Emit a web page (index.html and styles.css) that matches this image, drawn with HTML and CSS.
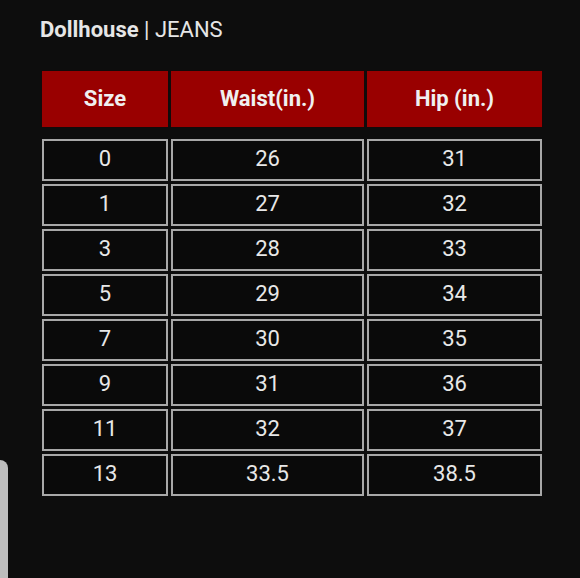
FILE: index.html
```html
<!DOCTYPE html>
<html>
<head>
<meta charset="utf-8">
<link rel="stylesheet" href="styles.css">
</head>
<body>
<div class="page">
  <h1 class="title"><b>Dollhouse</b> | JEANS</h1>
  <div class="chart">
    <div class="head">Size</div><div class="head">Waist(in.)</div><div class="head">Hip (in.)</div>
    <div class="spacer"></div>
    <div class="cell">0</div><div class="cell">26</div><div class="cell">31</div>
    <div class="cell">1</div><div class="cell">27</div><div class="cell">32</div>
    <div class="cell">3</div><div class="cell">28</div><div class="cell">33</div>
    <div class="cell">5</div><div class="cell">29</div><div class="cell">34</div>
    <div class="cell">7</div><div class="cell">30</div><div class="cell">35</div>
    <div class="cell">9</div><div class="cell">31</div><div class="cell">36</div>
    <div class="cell">11</div><div class="cell">32</div><div class="cell">37</div>
    <div class="cell">13</div><div class="cell">33.5</div><div class="cell">38.5</div>
  </div>
</div>
<div class="edge"></div>
</body>
</html>
```

FILE: styles.css
```css
html, body {
  margin: 0;
  padding: 0;
  background: #0d0d0d;
  width: 580px;
  height: 578px;
  overflow: hidden;
  font-family: Roboto, "Liberation Sans", sans-serif;
}
.page {
  padding: 18px 0 0 42px;
}
.title {
  margin: 0 0 29px -2px;
  font-size: 22px;
  line-height: 24px;
  font-weight: 400;
  color: #e6e6e6;
}
.title b {
  font-weight: 700;
}
.chart {
  display: grid;
  grid-template-columns: 126px 193px 175px;
  grid-template-rows: 56px 6px;
  grid-auto-rows: 42px;
  column-gap: 3px;
  row-gap: 3px;
  width: 500px;
}
.head {
  box-sizing: border-box;
  padding-bottom: 2px;
  background: #990000;
  color: #f0f0f0;
  font-weight: 700;
  font-size: 22px;
  display: flex;
  align-items: center;
  justify-content: center;
  box-shadow: 0 0 1px #330000;
}
.spacer {
  grid-column: 1 / 4;
}
.cell {
  box-sizing: border-box;
  padding-bottom: 3px;
  border: 2px solid #a8a8a8;
  background: #0a0a0a;
  color: #e8e8e8;
  font-size: 22px;
  display: flex;
  align-items: center;
  justify-content: center;
}
.edge {
  position: absolute;
  left: 0;
  top: 460px;
  width: 8px;
  height: 118px;
  background: #bdbdbd;
  border-radius: 0 8px 0 0;
}
```
